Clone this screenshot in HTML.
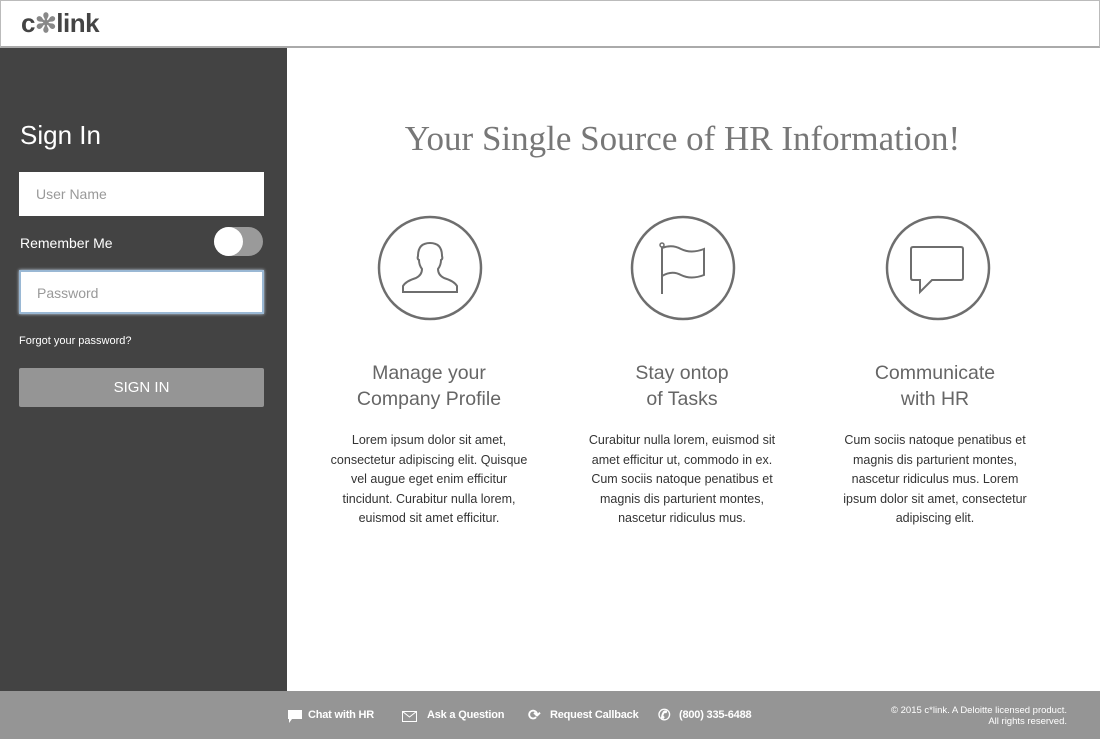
<!DOCTYPE html>
<html><head><meta charset="utf-8"><style>
*{margin:0;padding:0;box-sizing:border-box}
body{width:1100px;height:739px;position:relative;overflow:hidden;background:#fff;font-family:"Liberation Sans",sans-serif}
.hdr{position:absolute;left:0;top:0;width:1100px;height:48px;border:1px solid #bbb;border-bottom:2px solid #aaa;background:#fff}
.logo{position:absolute;left:20px;top:7px;font-size:26px;font-weight:bold;color:#444;letter-spacing:-0.5px}
.side{position:absolute;left:0;top:48px;width:287px;height:643px;background:#434343}
.t{position:absolute;color:#fff}
.inp{position:absolute;left:19px;width:245px;height:44px;background:#fff;color:#999;font-size:14px;padding:14px 17px}
.foot{position:absolute;left:0;top:691px;width:1100px;height:48px;background:#959595;color:#fff}
.fi{position:absolute;top:18px;font-size:11px;font-weight:bold;letter-spacing:-0.2px}
.col{position:absolute;width:240px;text-align:center;white-space:nowrap}
.col h2{font-weight:normal;font-size:19.5px;color:#666;line-height:26px}
.col p{font-size:12.5px;color:#333;line-height:19.5px;margin-top:19px}
svg{position:absolute}
</style></head><body>
<div class="hdr"><div class="logo">c<span style="color:#888">✻</span>link</div></div>
<div class="side">
<div class="t" style="left:20px;top:72px;font-size:26px">Sign In</div>
<div class="inp" style="top:124px">User Name</div>
<div class="t" style="left:20px;top:187px;font-size:14px">Remember Me</div>
<div style="position:absolute;left:214px;top:179px;width:49px;height:29px;border-radius:15px;background:#9a9a9a"></div>
<div style="position:absolute;left:214px;top:179px;width:29px;height:29px;border-radius:50%;background:#fff"></div>
<div class="inp" style="top:222px;border:2px solid #9ab8d4;padding:13px 16px;box-shadow:0 0 3px #cde">Password</div>
<div class="t" style="left:19px;top:287px;font-size:11px">Forgot your password?</div>
<div style="position:absolute;left:19px;top:320px;width:245px;height:39px;background:#959595;border-radius:2px;color:#fff;font-size:15px;text-align:center;line-height:39px">SIGN IN</div>
</div>
<div style="position:absolute;left:287px;width:813px;top:119px;text-align:center;font-family:'Liberation Serif',serif;font-size:35px;color:#777"><span style="position:relative;left:-11px">Your Single Source of HR Information!</span></div>
<svg style="left:376px;top:214px" width="108" height="108" viewBox="0 0 108 108"><circle cx="54" cy="54" r="51" fill="none" stroke="#6e6e6e" stroke-width="2.5"/><path d="M27 78 V72 Q30 67 40 64 Q46 61 46 55 Q43 51 43 46 Q41 45 42 42 Q42 29 54 29 Q66 29 66 42 Q67 45 65 46 Q65 51 62 55 Q62 61 68 64 Q78 67 81 72 V78 Z" fill="none" stroke="#6e6e6e" stroke-width="2"/></svg>
<svg style="left:629px;top:214px" width="108" height="108" viewBox="0 0 108 108"><circle cx="54" cy="54" r="51" fill="none" stroke="#6e6e6e" stroke-width="2.5"/><circle cx="33" cy="31" r="2" fill="none" stroke="#6e6e6e" stroke-width="1.5"/><path d="M33 33 V80 M33 34 Q43 30 52 35 Q62 40 75 35 V61 Q62 66 52 61 Q43 56 33 62" fill="none" stroke="#6e6e6e" stroke-width="2"/></svg>
<svg style="left:884px;top:214px" width="108" height="108" viewBox="0 0 108 108"><circle cx="54" cy="54" r="51" fill="none" stroke="#6e6e6e" stroke-width="2.5"/><path d="M29 33 Q27 33 27 35 V64 Q27 66 29 66 H36 V78 L48 66 H77 Q79 66 79 64 V35 Q79 33 77 33 Z" fill="none" stroke="#6e6e6e" stroke-width="2"/></svg>
<div class="col" style="left:309px;top:360px"><h2>Manage your<br>Company Profile</h2><p>Lorem ipsum dolor sit amet,<br>consectetur adipiscing elit. Quisque<br>vel augue eget enim efficitur<br>tincidunt. Curabitur nulla lorem,<br>euismod sit amet efficitur.</p></div>
<div class="col" style="left:562px;top:360px"><h2>Stay ontop<br>of Tasks</h2><p>Curabitur nulla lorem, euismod sit<br>amet efficitur ut, commodo in ex.<br>Cum sociis natoque penatibus et<br>magnis dis parturient montes,<br>nascetur ridiculus mus.</p></div>
<div class="col" style="left:815px;top:360px"><h2>Communicate<br>with HR</h2><p>Cum sociis natoque penatibus et<br>magnis dis parturient montes,<br>nascetur ridiculus mus. Lorem<br>ipsum dolor sit amet, consectetur<br>adipiscing elit.</p></div>
<div class="foot">
<svg style="left:288px;top:19px" width="14" height="13" viewBox="0 0 14 13"><path d="M0 0H14V9H4L1 13V9H0Z" fill="#fff"/></svg>
<div class="fi" style="left:308px">Chat with HR</div>
<svg style="left:402px;top:20px" width="15" height="11" viewBox="0 0 15 11"><rect x="0.5" y="0.5" width="14" height="10" fill="none" stroke="#fff"/><path d="M0.5 0.5L7.5 6L14.5 0.5" fill="none" stroke="#fff"/></svg>
<div class="fi" style="left:427px">Ask a Question</div>
<div class="fi" style="left:528px;top:15px;font-size:15px">⟳</div>
<div class="fi" style="left:550px">Request Callback</div>
<div class="fi" style="left:658px;top:15px;font-size:15px">✆</div>
<div class="fi" style="left:679px">(800) 335-6488</div>
<div style="position:absolute;right:33px;top:14px;font-size:9.5px;text-align:right;line-height:11px">© 2015 c*link. A Deloitte licensed product.<br>All rights reserved.</div>
</div>
</body></html>
